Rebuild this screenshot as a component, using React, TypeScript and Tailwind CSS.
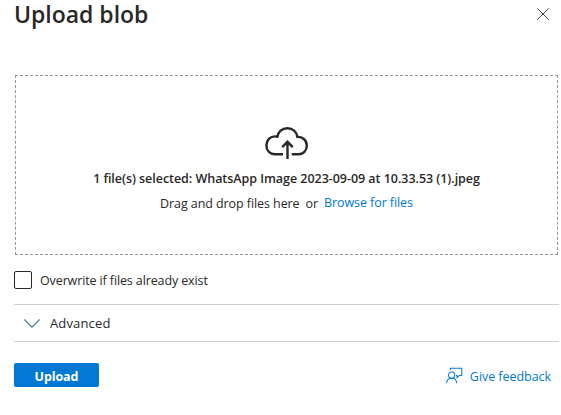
import React from "react";

function CloudUpload() {
  return (
    <svg className="block h-[34px] w-[44px]" viewBox="0 0 44 34" fill="none" stroke="#292827" strokeWidth="2.4">
      <path d="M18 28.3H9.8C4.8 28.3 1.4 24.5 1.4 19.4C1.4 14.2 5.2 10.4 9.8 10.4C11.1 10.4 12 10.6 13.2 11" />
      <path d="M12.2 11.2C13 5.8 17.1 2.2 22.4 2.2C27.8 2.2 31.5 5.7 32.4 10.9" />
      <path d="M31.2 11C37.5 10.2 41.8 14.2 41.8 19.5C41.8 24.6 38.3 28.3 33.4 28.3H26.8" />
      <path d="M22.5 33V15.8M17.2 21.1L22.5 15.8L27.8 21.1" />
    </svg>
  );
}

function FeedbackIcon() {
  return (
    <svg className="block h-[17px] w-[17px]" viewBox="0 0 18 17" fill="none" stroke="#0078d4" strokeWidth="1.1">
      <circle cx="6" cy="8" r="3.3" />
      <path d="M.6 16.6C.9 13.4 3 11.5 6 11.5S11.1 13.4 11.4 16.6" />
      <path d="M4.6 3V.8H16.7V8.4H14.2L11.7 10.7V8.4H10.6" />
    </svg>
  );
}

export default function App() {
  return (
    <main className="h-[415px] w-[561px] overflow-hidden bg-white pr-[2px] pl-[14px] font-['Open_Sans','Noto_Sans',sans-serif] text-[12.5px] text-[#292827]">
      <header className="flex h-[75px] items-start justify-between pr-[10px]">
        <h1 className="text-[23px] leading-[28px] font-semibold tracking-[-0.02px] whitespace-nowrap">Upload blob</h1>
        <button aria-label="Close" className="mt-[8px]">
          <svg className="block h-3 w-3" viewBox="0 0 12 12" stroke="#444" strokeWidth="1">
            <path d="M.3.3L11.7 11.7M11.7.3L.3 11.7" />
          </svg>
        </button>
      </header>
      <section className="ml-px flex h-[180px] w-[543px] flex-col items-center border border-dashed border-[#989694] pt-[50px]">
        <CloudUpload />
        <p className="mt-[10px] h-[18px] leading-[18px] font-semibold tracking-[-0.04px] whitespace-nowrap">
          1 file(s) selected: WhatsApp Image 2023-09-09 at 10.33.53 (1).jpeg
        </p>
        <p className="mt-[6px] flex h-[18px] leading-[18px] tracking-[-0.08px] whitespace-nowrap">
          <span className="pt-px">Drag and drop files here</span>
          <span className="ml-[6px] pt-px">or</span>
          <a className="ml-[6px] text-[#0078d4]">Browse for files</a>
        </p>
      </section>
      <label className="mt-[16px] flex h-[18px] items-center">
        <span className="h-[18px] w-[18px] rounded-[2px] border border-[#292827]" />
        <span className="ml-[8px] pt-[2px] leading-[18px] tracking-[-0.12px] whitespace-nowrap">Overwrite if files already exist</span>
      </label>
      <div className="mt-[15px] flex h-[38px] w-[545px] items-center border-y border-[#d2d0ce] pl-[10px]">
        <svg className="block h-[9px] w-[16px]" viewBox="0 0 16 9" fill="none" stroke="#3d7d9c" strokeWidth="1.1">
          <path d="M.4.5L8 8.1L15.6.5" />
        </svg>
        <span className="ml-[10px] text-[13px] leading-[18px] tracking-[0.15px]">Advanced</span>
      </div>
      <footer className="mt-[21px] flex h-[24px] items-center justify-between pr-[8px]">
        <button className="h-[24px] w-[85px] rounded-[2px] bg-[#0078d4] pt-[3px] text-[12.5px] leading-[21px] font-bold tracking-[-0.1px] text-white">Upload</button>
        <a className="flex items-center text-[#0078d4]">
          <FeedbackIcon />
          <span className="ml-[7px] pt-[3px] leading-[18px] tracking-[-0.05px] whitespace-nowrap">Give feedback</span>
        </a>
      </footer>
    </main>
  );
}
